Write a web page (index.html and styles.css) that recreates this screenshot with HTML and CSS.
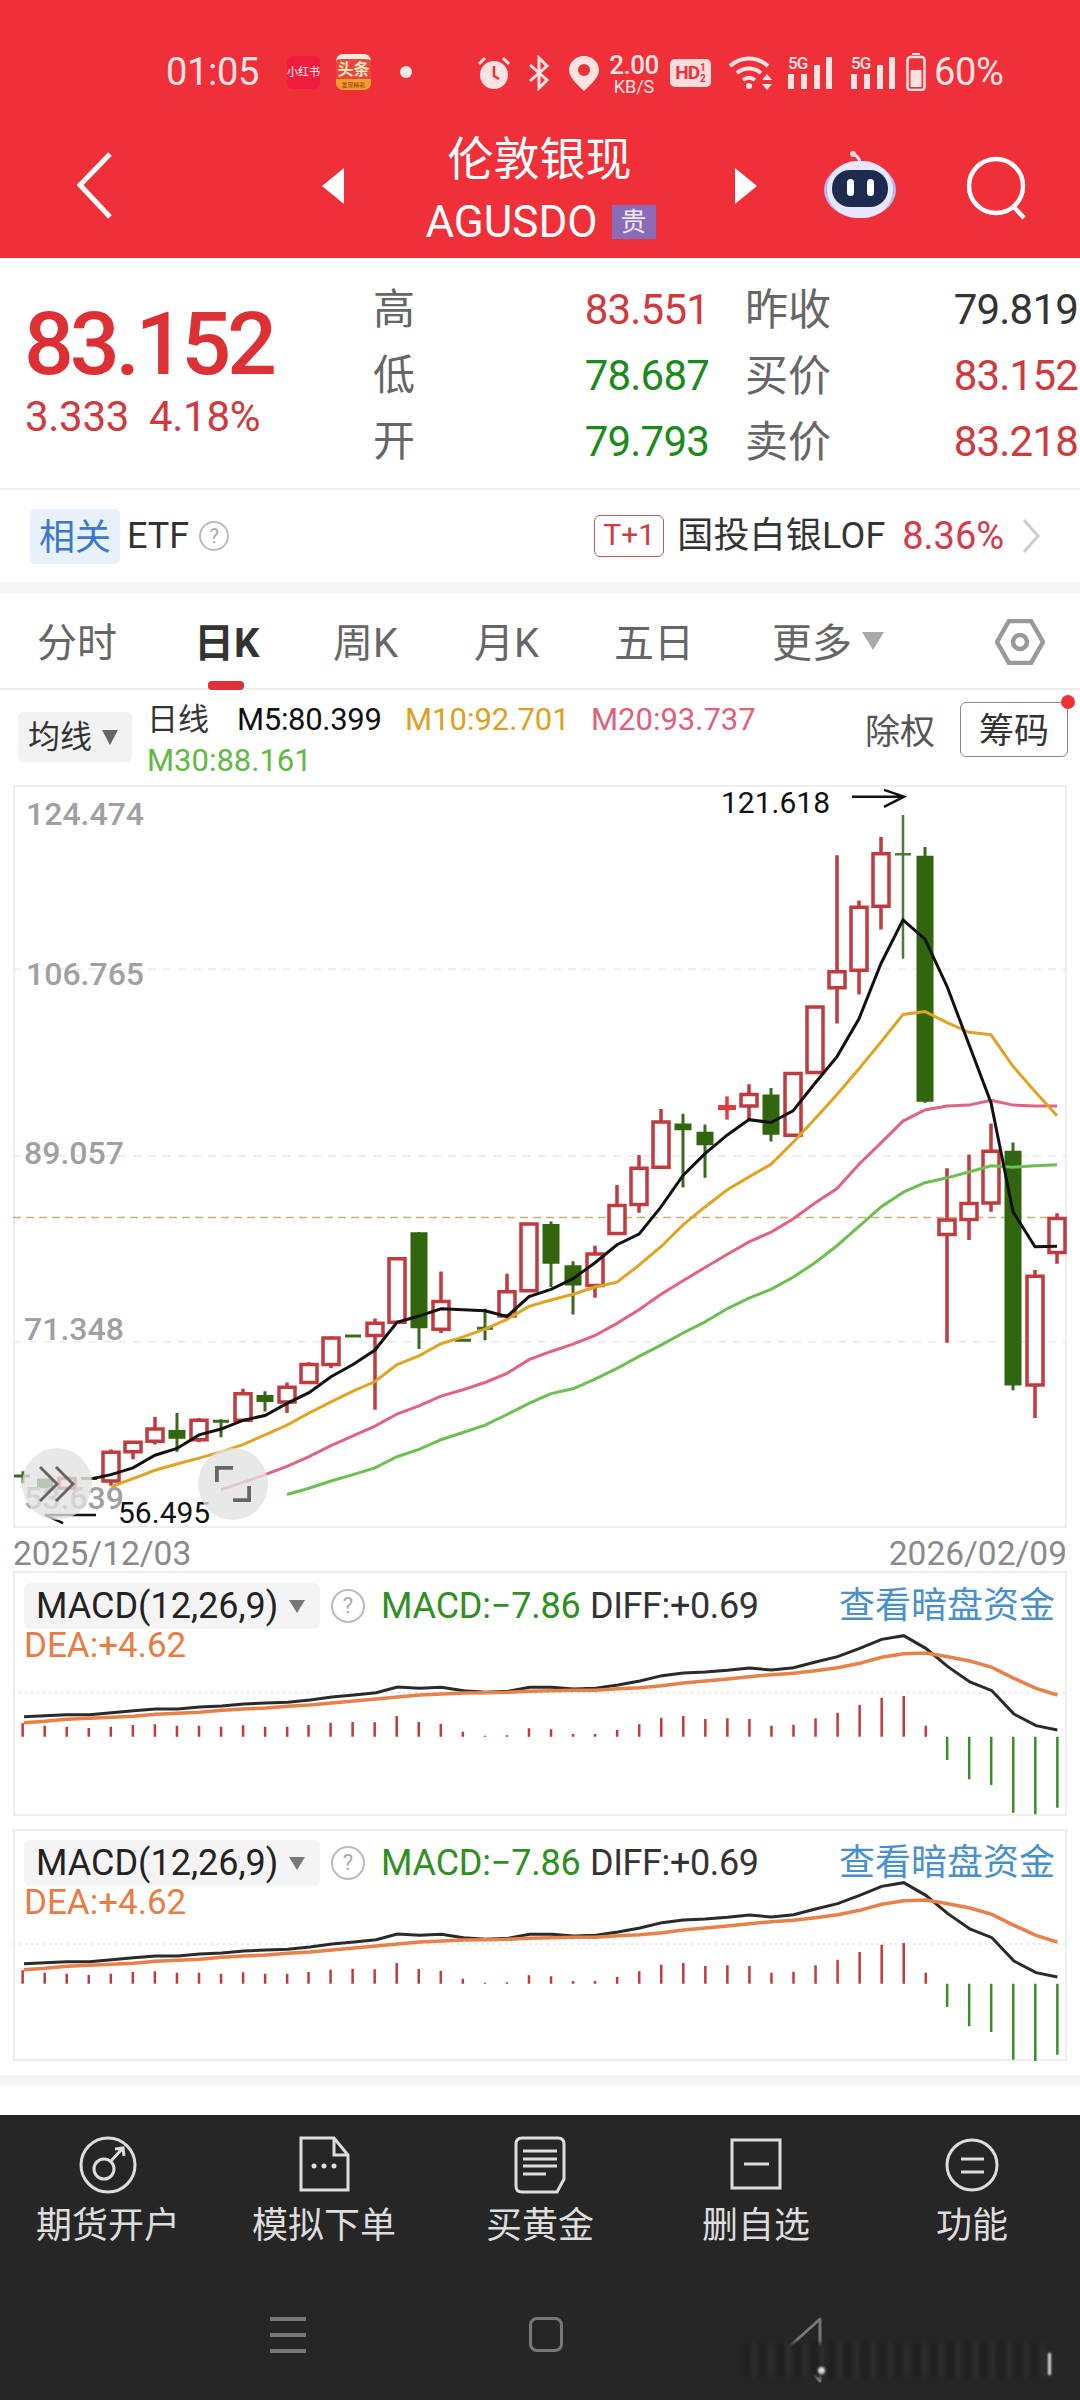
FILE: index.html
```html
<!DOCTYPE html>
<html lang="zh">
<head>
<meta charset="utf-8">
<title>伦敦银现 AGUSDO</title>
<link rel="stylesheet" href="styles.css">
</head>
<body>
<div class="app">

  <header class="top">
    <div class="status">
      <span class="clock">01:05</span>
      <span class="app-red">小红书</span>
      <span class="app-news"><b>头条</b><i>发现精彩</i></span>
      <span class="dot"></span>
      <svg class="st st-alarm" viewBox="0 0 34 36"><path class="pale-line" d="M2 9 8 3M32 9 26 3"/><circle class="pale-fill" cx="17" cy="20" r="14"/><path class="red-line" d="M17 11v10l5 3"/></svg>
      <svg class="st st-bt" viewBox="0 0 24 36"><path class="pale-line" d="M3 10 20 25 12 33V3l8 8L3 26"/></svg>
      <svg class="st st-loc" viewBox="0 0 32 36"><path class="pale-fill" d="M16 1C7 1 1 8 1 15c0 8 9 15 15 21 6-6 15-13 15-21C31 8 25 1 16 1Z"/><circle class="red-fill" cx="16" cy="15" r="6"/></svg>
      <span class="speed"><b>2.00</b><i>KB/S</i></span>
      <span class="hd"><b>HD</b><i>1<br>2</i></span>
      <svg class="st st-wifi" viewBox="0 0 46 36"><path class="pale-arc" d="M2 11c11-10 27-10 38 0M9 18c7-6 17-6 24 0M15 25c4-3 8-3 12 0"/><circle class="pale-fill" cx="21" cy="31" r="3"/><path class="pale-fill" d="M39 19l5 6h-10ZM39 35l5-6h-10Z"/></svg>
      <span class="sig"><i>5G</i><svg viewBox="0 0 44 34"><path class="pale-fill" d="M0 19h6v15H0ZM13 19h6v15h-6ZM26 10h6v24h-6ZM38 2h6v32h-6Z"/></svg></span>
      <span class="sig sig-b"><i>5G</i><svg viewBox="0 0 44 34"><path class="pale-fill" d="M0 19h6v15H0ZM13 19h6v15h-6ZM26 10h6v24h-6ZM38 2h6v32h-6Z"/></svg></span>
      <svg class="st st-bat" viewBox="0 0 20 38"><path class="pale-fill" d="M6 0h8v2H6Z"/><rect class="bat-case" x="1.5" y="4" width="17" height="33" rx="3"/><rect class="pale-fill" x="4.500" y="17" width="11" height="17" rx="1"/></svg>
      <span class="pct">60%</span>
    </div>

    <div class="titlebar">
      <svg class="tb-back" viewBox="0 0 40 70"><path d="M33 3 3 34l30 32"/></svg>
      <svg class="tb-prev" viewBox="0 0 22 36"><path d="M22 0v36L0 18Z"/></svg>
      <div class="tb-title">
        <h1>伦敦银现</h1>
        <div class="tb-sub"><span>AGUSDO</span><em>贵</em></div>
      </div>
      <svg class="tb-next" viewBox="0 0 22 36"><path d="M0 0v36l22-18Z"/></svg>
      <svg class="tb-robot" viewBox="0 0 72 68">
        <path class="rb-ant" d="M36 12c-1-4-3-6-6-8"/><circle class="rb-tip" cx="29" cy="4" r="3"/>
        <ellipse class="rb-ear" cx="36" cy="40" rx="36" ry="28"/>
        <rect class="rb-shell" x="3" y="11" width="66" height="57" rx="30"/>
        <rect class="rb-face" x="8" y="20" width="56" height="37" rx="18"/>
        <rect class="rb-eye" x="23" y="29" width="7" height="17" rx="3.500"/>
        <rect class="rb-eye" x="43" y="29" width="7" height="17" rx="3.500"/>
      </svg>
      <svg class="tb-search" viewBox="0 0 64 64"><circle cx="31" cy="30" r="27"/><path d="M48 50l11 12"/></svg>
    </div>
  </header>

  <section class="quote">
    <div class="last">
      <div class="last-price">83.152</div>
      <div class="last-change"><span>3.333</span><span>4.18%</span></div>
    </div>
    <div class="stats">
      <span class="lab">高</span><span class="val up">83.551</span><span class="lab lab-b">昨收</span><span class="val flat">79.819</span>
      <span class="lab">低</span><span class="val down">78.687</span><span class="lab lab-b">买价</span><span class="val up">83.152</span>
      <span class="lab">开</span><span class="val down">79.793</span><span class="lab lab-b">卖价</span><span class="val up">83.218</span>
    </div>
  </section>

  <section class="etf">
    <span class="etf-tag">相关</span>
    <span class="etf-name">ETF</span>
    <span class="help help-sm">?</span>
    <span class="etf-t1">T+1</span>
    <span class="etf-fund">国投白银LOF</span>
    <span class="etf-pct">8.36%</span>
    <svg class="etf-more" viewBox="0 0 18 34"><path d="M2 1l14 16L2 33"/></svg>
  </section>

  <div class="band"></div>

  <nav class="tabs">
    <span class="tab t1">分时</span>
    <span class="tab t2 on">日K</span>
    <span class="tab t3">周K</span>
    <span class="tab t4">月K</span>
    <span class="tab t5">五日</span>
    <span class="tab t6">更多</span>
    <span class="tri tri-more"></span>
    <svg class="tab-gear" viewBox="0 0 50 46"><path d="M14 2h22l12 21-12 21H14L2 23Z"/><circle cx="25" cy="23" r="7"/></svg>
  </nav>

  <section class="legend">
    <span class="ma-chip">均线<span class="tri tri-chip"></span></span>
    <div class="ma-list">
      <span class="ma-line">日线</span>
      <span class="ma5">M5:80.399</span>
      <span class="ma10">M10:92.701</span>
      <span class="ma20">M20:93.737</span>
      <span class="ma30">M30:88.161</span>
    </div>
    <span class="adj">除权</span>
    <span class="chips">筹码<i class="chips-dot"></i></span>
  </section>

  <section class="kline">
    <svg class="kline-plot" viewBox="13 -10 1054 1532" preserveAspectRatio="none">
      <path class="grid" d="M13 370H1067M13 755H1067M13 1138H1067"/>
      <path class="last-line" d="M13 882H1067"/>

      <!-- wicks -->
      <path class="wick-green" d="M23 1405V1430M177 1285V1365M221 1298V1335M265 1240V1282M419 912V1153M485 1070V1135M551 890V1025M573 972V1082M683 668V820M705 690V800M771 615V725M925 118V645M1013 727V1238"/>
      <path class="wick-green thin" d="M14 1415H30M213 1302H229M345 1126H361M455 1135H471M477 1110H493M81 1420H97"/>
      <path class="wick-green hair" d="M903 52V348M895 133H911"/>
      <path class="wick-red" d="M111 1360V1435M133 1345V1380M155 1293V1350M199 1295V1345M243 1235V1300M287 1222V1285M309 1180V1222M331 1127V1192M375 1090V1278M441 993V1120M507 998V1085M595 940V1047M617 815V915M639 753V872M661 658V778M749 607V680M837 135V482M859 228V422M881 97V288M947 780V1140M969 752V928M991 688V870M1035 990V1295M1057 873V977"/>

      <!-- bodies -->
      <path class="body-green" d="M37 1420h16V1440h-16ZM168.500 1320h17V1338h-17ZM256.500 1248h17V1262h-17ZM410.500 912h17V1110h-17ZM542.500 895h17V977h-17ZM564.500 980h17V1022h-17ZM674.500 688h17V702h-17ZM696.500 705h17V733h-17ZM762.500 628h17V711h-17ZM916.500 136h17V643h-17ZM1004.500 744h17V1228h-17Z"/>
      <path class="body-red" d="M59 1420h16V1440h-16ZM103 1366h16V1425h-16ZM125 1345h16V1365h-16ZM147 1318h16V1343h-16ZM191 1300h16V1340h-16ZM235 1245h16V1300h-16ZM279 1232h16V1262h-16ZM301 1185h16V1222h-16ZM323 1130h16V1185h-16ZM367 1100h16V1125h-16ZM389 967h16V1098h-16ZM433 1055h16V1112h-16ZM499 1035h16V1085h-16ZM521 895h16V1033h-16ZM587 957h16V1022h-16ZM609 857h16V915h-16ZM631 780h16V855h-16ZM653 685h16V778h-16ZM741 628h16V652h-16ZM785 585h16V712h-16ZM807 448h16V583h-16ZM829 375h16V408h-16ZM851 242h16V372h-16ZM873 132h16V240h-16ZM939 887h16V917h-16ZM961 853h16V886h-16ZM983 745h16V852h-16ZM1027 1003h16V1227h-16ZM1049 884h16V954h-16Z"/>
      <path class="doji-red" d="M727 632V680"/>
      <path class="doji-red wide" d="M718 655H736"/>

      <!-- moving averages -->
      <polyline class="line-m30" points="287,1453 309,1440 331,1425 353,1412 375,1398 397,1375 419,1360 441,1340 463,1325 485,1310 507,1288 529,1265 551,1245 573,1235 595,1215 617,1193 639,1168 661,1145 683,1120 705,1097 727,1070 749,1048 771,1030 793,1005 815,975 837,940 859,900 881,860 903,830 925,810 947,800 969,788 991,775 1013,778 1035,775 1057,773"/>
      <polyline class="line-m20" points="221,1443 243,1428 265,1412 287,1395 309,1375 331,1352 353,1332 375,1312 397,1287 419,1270 441,1250 463,1237 485,1222 507,1203 529,1175 551,1158 573,1143 595,1125 617,1100 639,1072 661,1040 683,1012 705,985 727,958 749,932 771,912 793,885 815,852 837,822 859,772 881,728 903,683 925,660 947,652 969,650 991,640 1013,650 1035,652 1057,652"/>
      <polyline class="line-m10" points="111,1437 133,1420 155,1403 177,1390 199,1378 221,1365 243,1350 265,1330 287,1310 309,1285 331,1262 353,1240 375,1220 397,1185 419,1167 441,1142 463,1128 485,1112 507,1092 529,1065 551,1052 573,1040 595,1025 617,1015 639,980 661,942 683,897 705,860 727,825 749,798 771,772 793,727 815,678 837,628 859,575 881,520 903,463 925,457 947,480 969,500 991,505 1013,570 1035,622 1057,672"/>
      <polyline class="line-m5" points="93,1420 111,1412 133,1398 155,1372 177,1358 199,1330 221,1318 243,1300 265,1290 287,1265 309,1243 331,1210 353,1185 375,1155 397,1098 419,1085 441,1070 463,1072 485,1074 507,1086 529,1045 551,1030 573,1008 595,975 617,938 639,916 661,860 683,795 705,750 727,712 749,680 771,686 793,662 815,605 837,550 859,472 881,358 903,268 925,308 947,405 969,525 991,645 1013,870 1035,942 1057,941"/>

      <!-- high and low markers -->
      <path class="marker" d="M852 14H904M884 0 904 14 884 35"/>
      <path class="marker" d="M96 1495H45L63 1512"/>
    </svg>

    <span class="axis a1">124.474</span>
    <span class="axis a2">106.765</span>
    <span class="axis a3">89.057</span>
    <span class="axis a4">71.348</span>
    <span class="axis a5">53.639</span>
    <span class="peak peak-hi">121.618</span>
    <span class="peak peak-lo">56.495</span>

    <span class="round-btn btn-fold">
      <svg viewBox="0 0 36 36"><path d="M1 1 18 18 1 35M17 1 34 18 17 35"/></svg>
    </span>
    <span class="round-btn btn-full">
      <svg viewBox="0 0 38 38"><path d="M2 17V2H19M19 36H36V21"/></svg>
    </span>
  </section>

  <div class="dates"><span>2025/12/03</span><span>2026/02/09</span></div>

  <section class="macd macd-a">
    <svg class="macd-plot" viewBox="19 33 1530 735" preserveAspectRatio="none">
      <path class="dotted" d="M19 398H1549"/>
      <g id="macd-series">
        <path class="bar-red" d="M33 530V490M65 530V497M97 530V500M129 530V504M161 530V500M193 530V495M225 530V493M257 530V497M289 530V497M321 530V500M353 530V496M385 530V500M417 530V500M448 530V495M480 530V488M512 530V486M544 530V487M576 530V468M608 530V486M640 530V492M672 530V515M704 530V527M736 530V526M768 530V505M800 530V508M832 530V522M864 530V522M896 530V510M928 530V493M960 530V473M992 530V468M1024 530V477M1056 530V475M1088 530V477M1120 530V497M1152 530V494M1184 530V475M1216 530V458M1248 530V435M1280 530V413M1312 530V408M1344 530V497"/>
        <path class="bar-green" d="M1375 530V600M1407 530V658M1439 530V675M1471 530V758M1503 530V763M1535 530V743"/>
        <polyline class="line-diff" points="35,470 65,467 97,464 130,464 162,458 194,452 226,447 258,447 290,441 322,438 354,432 386,429 418,427 450,420 482,411 514,405 546,398 577,381 609,385 641,382 673,392 705,397 737,394 769,382 801,382 833,387 865,385 897,375 929,363 961,347 992,339 1024,336 1056,331 1088,324 1120,330 1152,323 1184,306 1216,290 1248,265 1280,238 1312,227 1344,265 1376,320 1408,366 1440,392 1472,462 1504,497 1535,510"/>
        <polyline class="line-dea" points="35,488 65,484 97,478 130,475 162,472 194,469 226,463 258,460 290,457 322,451 354,447 386,444 418,439 450,435 482,429 514,423 546,417 577,411 609,405 641,402 673,399 705,398 737,397 769,394 801,392 833,391 865,391 897,386 929,383 961,377 992,369 1024,363 1056,357 1088,350 1120,344 1152,340 1184,332 1216,323 1248,310 1280,292 1312,281 1344,279 1376,290 1408,303 1440,322 1472,355 1504,385 1535,405"/>
      </g>
    </svg>
    <div class="macd-head">
      <span class="macd-chip">MACD(12,26,9)<span class="tri tri-macd"></span></span>
      <span class="help">?</span>
      <span class="macd-val">MACD:−7.86</span>
      <span class="diff-val">DIFF:+0.69</span>
      <span class="dark-flow">查看暗盘资金</span>
    </div>
    <div class="dea-val">DEA:+4.62</div>
  </section>

  <section class="macd macd-b">
    <svg class="macd-plot" viewBox="19 66 1530 696" preserveAspectRatio="none">
      <path class="dotted" d="M19 411H1549"/>
      <use href="#macd-series"/>
    </svg>
    <div class="macd-head">
      <span class="macd-chip">MACD(12,26,9)<span class="tri tri-macd"></span></span>
      <span class="help">?</span>
      <span class="macd-val">MACD:−7.86</span>
      <span class="diff-val">DIFF:+0.69</span>
      <span class="dark-flow">查看暗盘资金</span>
    </div>
    <div class="dea-val">DEA:+4.62</div>
  </section>

  <div class="band band-low"></div>

  <footer class="dock">
    <div class="actions">
      <div class="action">
        <svg viewBox="0 0 60 60"><circle cx="30" cy="30" r="27"/><circle cx="26" cy="34" r="10"/><path d="M33 26l12-13M37 14l8-1 1 8"/></svg>
        <span>期货开户</span>
      </div>
      <div class="action">
        <svg viewBox="0 0 60 60"><path d="M7 3H40L54 20V55H7ZM40 3V20H54"/><circle class="dock-dot" cx="20" cy="31" r="2.500"/><circle class="dock-dot" cx="30" cy="31" r="2.500"/><circle class="dock-dot" cx="40" cy="31" r="2.500"/></svg>
        <span>模拟下单</span>
      </div>
      <div class="action">
        <svg viewBox="0 0 60 60"><path d="M12 3H48Q54 3 54 9V44L47 57H12Q6 57 6 51V9Q6 3 12 3ZM13 16H47M13 24H47M13 31H47M13 39H36"/></svg>
        <span>买黄金</span>
      </div>
      <div class="action">
        <svg viewBox="0 0 60 60"><path d="M6 5H54V53H6ZM18 29H43"/></svg>
        <span>删自选</span>
      </div>
      <div class="action">
        <svg viewBox="0 0 60 60"><circle cx="30" cy="30" r="25"/><path d="M19 24H42M19 37H42"/></svg>
        <span>功能</span>
      </div>
    </div>
    <div class="sysnav">
      <span class="sys-menu"><i></i><i></i><i></i></span>
      <span class="sys-home"></span>
      <svg class="sys-back" viewBox="0 0 36 70"><path d="M34 2 3 30 34 64Z"/></svg>
    </div>
    <div class="smudge"></div>
    <i class="spot spot-a"></i>
    <i class="spot spot-b"></i>
  </footer>
</div>
</body>
</html>
```

FILE: styles.css
```css
* { box-sizing: border-box; }

html, body { margin: 0; padding: 0; background: #fff; }

body {
  width: 1080px;
  height: 2400px;
  overflow: hidden;
  font-family: Roboto, "Noto Sans CJK SC", sans-serif;
  color: #222;
}

.app { width: 1080px; height: 2400px; display: flex; flex-direction: column; }

i, em { font-style: normal; }

/* triangles used by the dropdowns */
.tri { display: inline-block; width: 0; height: 0; border-style: solid; border-color: #888 transparent transparent; }

/* ---------- red header ---------- */
.top { height: 258px; background: #f03039; color: #fff; flex: none; }

.status { height: 120px; padding: 52px 0 0 166px; display: flex; align-items: flex-start; color: #ffe3e3; }
.clock { font-size: 38px; line-height: 40px; width: 95px; flex: none; letter-spacing: -0.300px; }

.app-red {
  width: 33px; height: 33px; margin: 4px 0 0 26px; flex: none;
  background: #f21c3e; color: #fff; border-radius: 6px;
  font-size: 11px; line-height: 33px; text-align: center; white-space: nowrap; overflow: hidden;
}
.app-news {
  width: 35px; height: 36px; margin: 2px 0 0 16px; flex: none; overflow: hidden;
  border-radius: 7px; border-top: 5px solid #ffe9d8;
  background: linear-gradient(#e8483a 65%, #f0a030 65%);
  display: flex; flex-direction: column; align-items: center;
}
.app-news b { font-size: 16px; line-height: 22px; font-weight: 700; color: #ffe9c8; white-space: nowrap; }
.app-news i { font-size: 6px; line-height: 8px; color: #a03010; white-space: nowrap; }

.dot { width: 12px; height: 12px; margin: 14px 0 0 29px; border-radius: 50%; background: #ffeaea; flex: none; }

.st { display: block; flex: none; }
.pale-fill { fill: #ffe3e3; }
.red-fill { fill: #f03039; }
.pale-line { fill: none; stroke: #ffe3e3; stroke-width: 3; }
.red-line { fill: none; stroke: #f03039; stroke-width: 2.500; }
.pale-arc { fill: none; stroke: #ffe3e3; stroke-width: 4; }
.bat-case { fill: none; stroke: #ffe3e3; stroke-width: 2.500; }

.st-alarm { width: 34px; height: 36px; margin: 3px 0 0 65px; }
.st-bt { width: 24px; height: 36px; margin: 3px 0 0 16px; }
.st-loc { width: 32px; height: 36px; margin: 3px 0 0 17px; }

.speed { width: 52px; margin: 1px 0 0 8px; display: flex; flex-direction: column; align-items: center; flex: none; }
.speed b { font-size: 26px; line-height: 24px; font-weight: 500; letter-spacing: -0.500px; }
.speed i { font-size: 18px; line-height: 15px; margin-top: 2px; }

.hd {
  width: 41px; height: 28px; margin: 7px 0 0 10px; flex: none;
  background: #ffdcdc; color: #f03039; border-radius: 5px;
  display: flex; align-items: center; justify-content: center; gap: 1px;
}
.hd b { font-size: 19px; line-height: 28px; font-weight: 700; letter-spacing: -1px; }
.hd i { font-size: 10px; line-height: 11px; font-weight: 700; text-align: center; }

.st-wifi { width: 46px; height: 36px; margin: 3px 0 0 17px; }

.sig { position: relative; width: 44px; height: 34px; margin: 3px 0 0 14px; flex: none; }
.sig-b { margin-left: 19px; }
.sig svg { display: block; width: 44px; height: 34px; }
.sig i { position: absolute; left: 0; top: -1px; font-size: 17px; line-height: 18px; font-weight: 500; letter-spacing: -1px; }

.st-bat { width: 20px; height: 38px; margin: 1px 0 0 11px; }
.pct { font-size: 38px; line-height: 40px; margin-left: 8px; flex: none; letter-spacing: -0.300px; }

.titlebar { height: 138px; display: flex; align-items: flex-start; }
.titlebar svg { display: block; flex: none; }

.tb-back { width: 40px; height: 70px; margin: 31px 0 0 77px; }
.tb-back path { fill: none; stroke: #fff; stroke-width: 5; }
.tb-prev { width: 22px; height: 36px; margin: 48px 0 0 205px; }
.tb-next { width: 22px; height: 36px; margin: 48px 0 0 0; }
.tb-prev path, .tb-next path { fill: #fff; }

.tb-title { width: 391px; display: flex; flex-direction: column; align-items: center; }
.tb-title h1 { margin: 9px 0 0; font-size: 46px; line-height: 60px; font-weight: 400; }
.tb-sub { display: flex; align-items: center; height: 48px; margin-top: 9px; padding-left: 2px; }
.tb-sub span { font-size: 44px; line-height: 48px; font-weight: 400; letter-spacing: 0; }
.tb-sub em { width: 44px; height: 34px; margin-left: 14px; background: #8a6bb8; color: #f4e8ff; font-size: 26px; line-height: 34px; text-align: center; }

.tb-robot { width: 72px; height: 68px; margin: 30px 0 0 67px; }
.rb-ant { fill: none; stroke: #efe9ff; stroke-width: 3; }
.rb-tip { fill: #f6d0e0; }
.rb-ear { fill: #b9b4f0; }
.rb-shell { fill: #e9e6ff; }
.rb-face { fill: #1d2c4e; }
.rb-eye { fill: #fff; }

.tb-search { width: 64px; height: 64px; margin: 36px 0 0 69px; }
.tb-search circle, .tb-search path { fill: none; stroke: #fff; stroke-width: 4.500; }

/* ---------- quote ---------- */
.quote { height: 232px; flex: none; display: flex; border-bottom: 2px solid #eee; }

.last { width: 373px; padding: 41px 0 0 24px; flex: none; }
.last-price { font-size: 88px; line-height: 90px; font-weight: 500; color: #dc3035; letter-spacing: -4.300px; }
.last-change { display: flex; gap: 24px; margin-top: 3px; padding-left: 1px; font-size: 42px; line-height: 50px; color: #cf3a3e; letter-spacing: -0.300px; }
.last-change span:first-child { width: 100px; white-space: nowrap; }

.stats {
  padding-top: 19px;
  display: grid;
  grid-template-columns: 212px 124px 248px 121px;
  grid-auto-rows: 66px;
  align-items: center;
}
.lab { font-size: 42px; line-height: 66px; color: #666; }
.lab-b { padding-left: 36px; font-size: 43px; }
.val { font-size: 42px; line-height: 66px; letter-spacing: -0.800px; justify-self: end; white-space: nowrap; }
.up { color: #cf3a3e; }
.down { color: #1a8a1a; }
.flat { color: #333; }

/* ---------- related fund row ---------- */
.etf { height: 92px; flex: none; display: flex; align-items: center; padding-left: 30px; }
.etf-tag { width: 90px; height: 55px; background: #e8f0fb; color: #3a78cc; font-size: 36px; line-height: 58px; text-align: center; border-radius: 5px; flex: none; }
.etf-name { font-size: 36px; line-height: 48px; margin-left: 7px; color: #333; flex: none; }
.help {
  width: 34px; height: 34px; border: 2px solid #bbb; border-radius: 50%; flex: none;
  color: #aaa; font-size: 22px; line-height: 30px; text-align: center;
}
.help-sm { width: 30px; height: 30px; line-height: 26px; font-size: 20px; margin-left: 10px; }
.etf-t1 {
  width: 70px; height: 42px; margin-left: 365px; flex: none;
  border: 1.500px solid #c25a5a; border-radius: 6px; color: #cf3a3e;
  font-size: 30px; line-height: 38px; text-align: center;
}
.etf-fund { font-size: 36px; line-height: 48px; margin-left: 13px; color: #333; width: 210px; white-space: nowrap; flex: none; letter-spacing: 0.200px; }
.etf-pct { font-size: 38px; line-height: 48px; margin-left: 15px; color: #d43a4c; flex: none; width: 105px; }
.etf-more { width: 18px; height: 34px; margin-left: 15px; flex: none; }
.etf-more path { fill: none; stroke: #ccc; stroke-width: 3; }

.band { height: 11px; flex: none; background: #f5f5f5; }

/* ---------- period tabs ---------- */
.tabs { position: relative; height: 97px; flex: none; border-bottom: 2px solid #ececec; display: flex; align-items: flex-start; padding-top: 27px; }
.tab { font-size: 40px; line-height: 48px; color: #666; white-space: nowrap; flex: none; }
.t1 { margin-left: 37px; width: 157px; }
.t2 { width: 139px; color: #333; font-weight: 700; }
.t3 { width: 141px; }
.t4 { width: 140px; }
.t5 { width: 158px; }
.t6 { width: 90px; }
.tab.on::after {
  content: ""; position: absolute; left: 208px; bottom: -2px;
  width: 36px; height: 9px; border-radius: 4px; background: #e03038;
}
.tri-more { border-width: 18px 11px 0; border-top-color: #aaa; margin-top: 12px; flex: none; }
.tab-gear { width: 50px; height: 46px; margin-left: 111px; margin-top: -1px; flex: none; }
.tab-gear path, .tab-gear circle { fill: none; stroke: #999; stroke-width: 4.500; }

/* ---------- moving average legend ---------- */
.legend { position: relative; height: 95px; flex: none; }
.ma-chip {
  position: absolute; left: 18px; top: 22px; width: 114px; height: 50px;
  background: #f2f2f2; border-radius: 6px; padding-left: 10px;
  font-size: 32px; line-height: 54px; color: #333; display: flex; align-items: center;
}
.tri-chip { border-width: 15px 8px 0; border-top-color: #666; margin-left: 10px; }
.ma-list { position: absolute; left: 147px; top: 10px; width: 660px; display: flex; flex-wrap: wrap; font-size: 31px; line-height: 40px; white-space: nowrap; }
.ma-line { width: 90px; color: #333; }
.ma5 { width: 168px; color: #111; letter-spacing: -0.300px; }
.ma10 { width: 186px; color: #dfa022; }
.ma20 { color: #e06078; }
.ma30 { width: 100%; color: #62b844; margin-top: 1px; }
.adj { position: absolute; left: 865px; top: 20px; font-size: 35px; line-height: 46px; color: #555; }
.chips {
  position: absolute; left: 960px; top: 12px; width: 108px; height: 55px;
  border: 1.500px solid #888; border-radius: 6px;
  font-size: 35px; line-height: 57px; text-align: center; color: #333;
}
.chips-dot { position: absolute; right: -8px; top: -8px; width: 14px; height: 14px; border-radius: 50%; background: #f03039; }

/* ---------- candlestick chart ---------- */
.kline { position: relative; height: 743px; margin: 0 13px; flex: none; border: 2px solid #eee; }
.kline-plot { position: absolute; left: -2px; top: -2px; width: 1054px; height: 743px; display: block; overflow: visible; }

.kline-plot path, .kline-plot polyline, .macd-plot path, .macd-plot polyline { vector-effect: non-scaling-stroke; fill: none; }

.grid { stroke: #eee; stroke-width: 2; stroke-dasharray: 8 7; }
.last-line { stroke: #c9b078; stroke-width: 1.500; stroke-dasharray: 8 5; }
.wick-green { stroke: #3a6a1e; stroke-width: 3; }
.wick-green.thin { stroke-width: 3; }
.wick-green.hair { stroke-width: 2.500; stroke: #4d7a3a; }
.wick-red { stroke: #c23a3e; stroke-width: 3.500; }
.kline-plot .body-green { fill: #31660f; }
.kline-plot .body-red { fill: #fff; stroke: #c23a3e; stroke-width: 3.500; }
.doji-red { stroke: #e83a3a; stroke-width: 3.500; }
.doji-red.wide { stroke-width: 5; }
.line-m5 { stroke: #111; stroke-width: 3; }
.line-m10 { stroke: #e0a424; stroke-width: 3; }
.line-m20 { stroke: #e06480; stroke-width: 3; }
.line-m30 { stroke: #6cbf50; stroke-width: 3; }
.marker { stroke: #111; stroke-width: 2.500; }

.axis { position: absolute; font-size: 32px; line-height: 40px; font-weight: 500; color: #a0a0a0; }
.a1 { left: 11px; top: 7px; }
.a2 { left: 11px; top: 167px; }
.a3 { left: 9px; top: 346px; }
.a4 { left: 9px; top: 522px; }
.a5 { left: 9px; top: 691px; }

.peak { position: absolute; font-size: 30px; line-height: 36px; color: #111; }
.peak-hi { left: 706px; top: -2px; }
.peak-lo { left: 103px; top: 708px; }

.round-btn {
  position: absolute; top: 661px; width: 70px; height: 72px; border-radius: 50%;
  background: rgba(226, 226, 226, 0.78);
  display: flex; align-items: center; justify-content: center;
}
.btn-fold { left: 7px; }
.btn-full { left: 183px; }
.round-btn svg { display: block; width: 36px; height: 36px; }
.btn-fold path { fill: none; stroke: #666; stroke-width: 3; }
.btn-full path { fill: none; stroke: #666; stroke-width: 4; }

.dates { height: 43px; flex: none; padding: 0 13px; display: flex; justify-content: space-between; font-size: 33.500px; line-height: 51px; color: #8a8a8a; }

/* ---------- MACD panels ---------- */
.macd { position: relative; margin: 0 13px; flex: none; border: 2px solid #eee; padding-left: 9px; }
.macd-a { height: 245px; padding-top: 10px; }
.macd-b { height: 232px; margin-top: 13px; padding-top: 9px; }

.macd-plot { position: absolute; left: -2px; top: -2px; width: 1054px; height: 100%; display: block; }
.macd-a .macd-plot { height: 245px; }
.macd-b .macd-plot { height: 232px; }
.dotted { stroke: #ddd; stroke-width: 1.500; stroke-dasharray: 2 4; }
.bar-red { stroke: #c23a3a; stroke-width: 2.500; }
.bar-green { stroke: #3d8c2a; stroke-width: 2.500; }
.line-diff { stroke: #2a2a2a; stroke-width: 3; }
.line-dea { stroke: #e8804a; stroke-width: 3.500; }

.macd-head { position: relative; display: flex; align-items: center; height: 46px; white-space: nowrap; font-size: 36px; line-height: 50px; }
.macd-chip {
  width: 296px; height: 46px; background: #f4f4f4; border-radius: 6px; padding-left: 12px;
  color: #222; display: flex; align-items: center; flex: none;
}
.tri-macd { border-width: 13px 8px 0; border-top-color: #777; margin-left: 11px; }
.macd-head .help { margin-left: 11px; }
.macd-val { width: 209px; margin-left: 16px; color: #2f8f22; flex: none; letter-spacing: -0.200px; }
.diff-val { width: 249px; color: #333; flex: none; letter-spacing: -0.400px; }
.dark-flow { font-size: 36px; color: #4a90c8; flex: none; }
.dea-val { position: relative; font-size: 35px; line-height: 40px; color: #e87c44; margin: -3px 0 0 0; }

.band-low { height: 11px; margin-top: 14px; }

/* ---------- dark dock ---------- */
.dock { position: relative; margin-top: 29px; flex: 1; background: #262626; }
.actions { display: flex; padding-top: 20px; }
.action { width: 216px; display: flex; flex-direction: column; align-items: center; color: #ddd; }
.action svg { display: block; width: 60px; height: 60px; }
.action svg path, .action svg circle { fill: none; stroke: #ddd; stroke-width: 3; }
.action svg .dock-dot { fill: #ddd; stroke: none; }
.action span { margin-top: 9px; font-size: 36px; line-height: 44px; }

.sysnav { margin-top: 69px; padding-left: 270px; display: flex; align-items: flex-start; }
.sys-menu { width: 36px; height: 36px; display: flex; flex-direction: column; justify-content: space-between; flex: none; }
.sys-menu i { display: block; height: 4px; background: #777; }
.sys-home { width: 34px; height: 35px; margin-left: 223px; border: 3px solid #777; border-radius: 8px; flex: none; }
.sys-back { width: 36px; height: 70px; margin-left: 223px; flex: none; display: block; }
.sys-back path { fill: none; stroke: #777; stroke-width: 3; stroke-linejoin: round; }

/* a rubbed-out patch over the lower right of the navigation bar */
.smudge {
  position: absolute; left: 745px; top: 228px; width: 305px; height: 34px;
  background: repeating-linear-gradient(90deg, #1e1e1e 0 6px, #303030 6px 11px, #242424 11px 17px);
  filter: blur(2px);
}
.spot { position: absolute; background: #ddd; filter: blur(1px); }
.spot-a { left: 818px; top: 252px; width: 7px; height: 7px; border-radius: 50%; }
.spot-b { left: 1048px; top: 238px; width: 3px; height: 22px; }
```
